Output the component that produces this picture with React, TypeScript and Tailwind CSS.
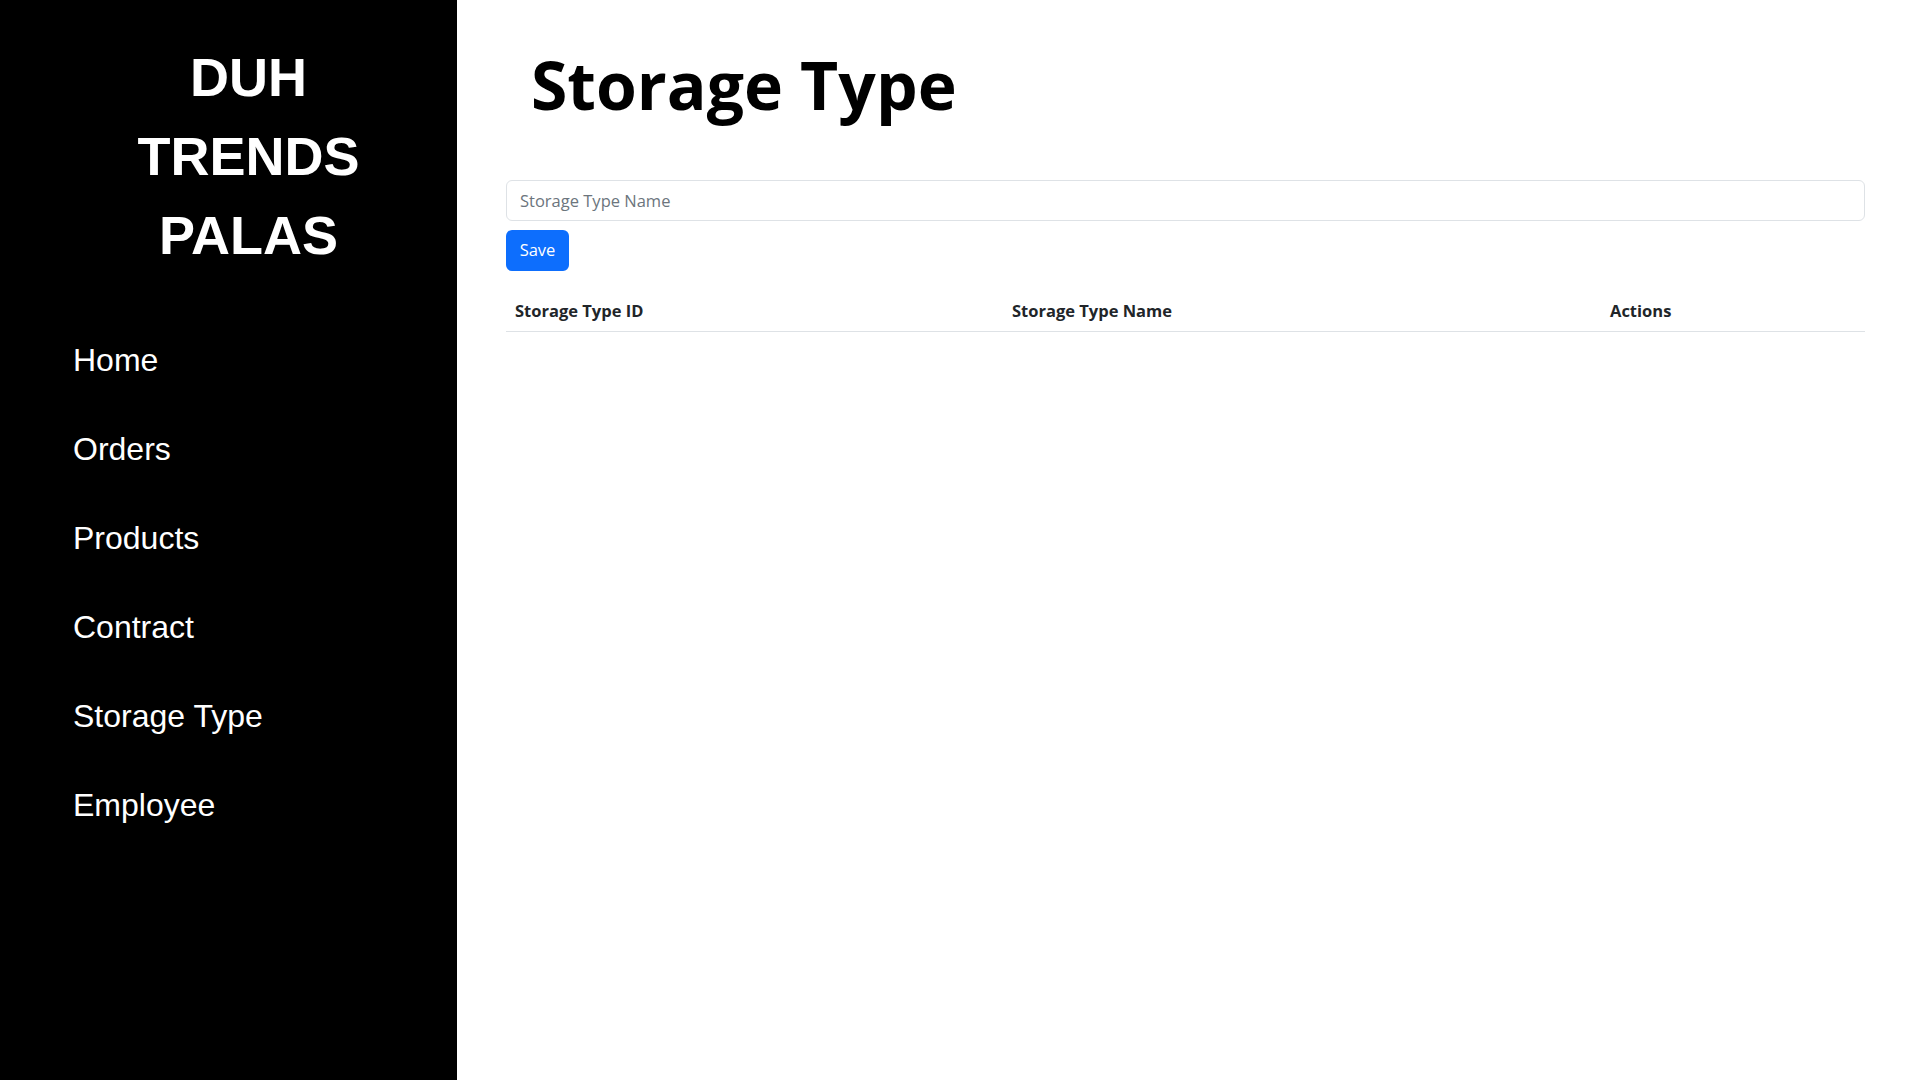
const navItems = ["Home", "Orders", "Products", "Contract", "Storage Type", "Employee"];

export default function App() {
  return (
    <div className="flex h-screen w-full overflow-hidden bg-white">
      <aside className="w-[457px] shrink-0 bg-black text-white">
        <div className="pl-[40px] pt-[38px] text-center font-['Liberation_Sans',Arial,sans-serif] text-[54px] font-bold leading-[79px]">
          <div>DUH</div>
          <div>TRENDS</div>
          <div>PALAS</div>
        </div>
        <nav className="mt-[41px] flex flex-col pl-[73px] font-['Liberation_Sans',Arial,sans-serif] text-[32px] leading-[89px]">
          {navItems.map((item) => (
            <a key={item} href="#" className="block">
              {item}
            </a>
          ))}
        </nav>
      </aside>

      <main className="flex-1 pl-[49px] pr-[55px] pt-[51px] font-['Open_Sans','Noto_Sans',sans-serif]">
        <h1 className="pl-[25px] font-['Open_Sans',sans-serif] text-[66px] font-bold leading-none text-black">
          Storage Type
        </h1>
        <input
          type="text"
          placeholder="Storage Type Name"
          className="mt-[63px] block h-[41px] w-full rounded-[6px] border border-[#dee2e6] px-[13px] text-[16.5px] text-[#212529] outline-none placeholder:text-[#6c757d]"
        />
        <button className="mt-[9px] h-[41px] w-[63px] rounded-[6px] bg-[#0d6efd] text-[16.5px] text-white">
          Save
        </button>
        <div className="mt-[20px] grid h-[41px] grid-cols-[497px_598px_1fr] items-center border-b border-[#dee2e6] text-[16.5px] font-bold text-[#212529]">
          <div className="px-[9px]">Storage Type ID</div>
          <div className="px-[9px]">Storage Type Name</div>
          <div className="px-[9px]">Actions</div>
        </div>
      </main>
    </div>
  );
}
